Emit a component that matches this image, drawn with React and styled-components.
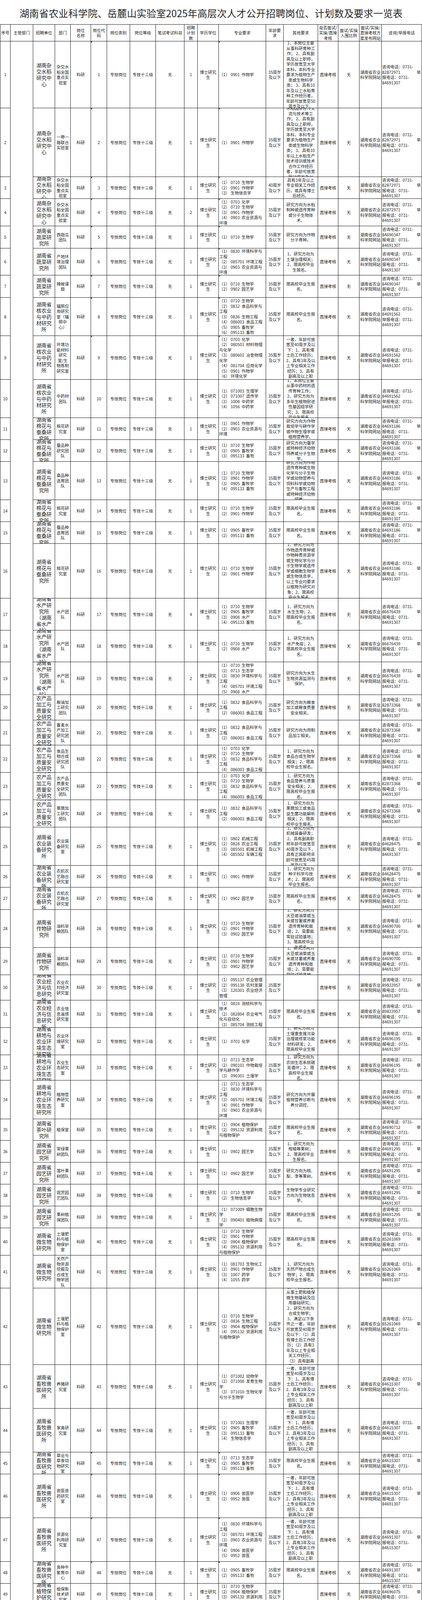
import React from 'react';
import styled, { createGlobalStyle, css } from 'styled-components';

const GlobalStyle = createGlobalStyle`
  html, body { margin: 0; padding: 0; background: #fff; }
  body {
    font-family: "Noto Sans CJK SC", "Noto Sans", "Liberation Sans", sans-serif;
    color: #1e1e1e;
  }
  #root { width: 1080px; }
`;

const COLS = [26, 58, 56, 40, 52, 41, 59, 66, 73, 34, 54, 121, 45, 88, 52, 54, 57, 103];
const HEIGHTS = [171, 176, 56, 70, 57, 69, 57, 98, 112, 98, 56, 56, 98, 56, 56, 140, 82, 81, 84, 65, 64, 70, 70, 70, 98, 56, 57, 97, 70, 65, 70, 70, 65, 99, 55, 56, 56, 56, 56, 70, 84, 196, 112, 112, 56, 112, 112, 56, 55, 56, 71];

const Page = styled.div`
  width: 1080px;
`;

const Title = styled.h1`
  margin: 0;
  height: 62px;
  padding-top: 4px;
  box-sizing: border-box;
  display: flex;
  align-items: center;
  justify-content: center;
  font-size: 25px;
  font-weight: 400;
  color: #2a2a2a;
  white-space: nowrap;
`;

const Table = styled.div`
  display: grid;
  grid-template-columns: ${COLS.map((c) => c + 'px').join(' ')};
  grid-template-rows: 43px ${HEIGHTS.map((h) => h + 'px').join(' ')};
  border-top: 1px solid #1a1a1a;
  border-left: 1px solid #1a1a1a;
  width: max-content;
`;

const Cell = styled.div`
  position: relative;
  box-sizing: border-box;
  border-right: 1px solid #1a1a1a;
  border-bottom: 1px solid #1a1a1a;
  display: flex;
  align-items: center;
  justify-content: center;
  overflow: hidden;
  min-width: 0;
  min-height: 0;
  font-size: 10.5px;
  line-height: 13.5px;
  text-align: center;
  padding: 0 1px;
  color: #1e1e1e;
  ${(p) =>
    p.$mark &&
    css`
      &::before {
        content: '';
        position: absolute;
        top: 0;
        left: 0;
        border-top: 4px solid #1f8c1f;
        border-right: 4px solid transparent;
      }
    `}
`;

const Inner = styled.div`
  width: 100%;
`;

const HeadCell = styled(Cell)`
  padding: ${(p) => p.$pad || '0 1px'};
`;

const SeqCell = styled(Cell)``;

const MergedCell = styled(Cell)`
  grid-column: 2;
  grid-row: 2 / span ${HEIGHTS.length};
`;

const UnitCell = styled(Cell)`
  font-size: 13px;
  line-height: 16px;
  padding: 0 6px;
`;

const DeptCell = styled(Cell)`
  padding: 0 2px;
`;

const EduCell = styled(Cell)`
  padding: 0 3px;
`;

const CountCell = styled(Cell)`
  padding: 0 2px;
`;

const AgeCell = styled(Cell)`
  padding: 0 3px;
`;

const MajorCell = styled(Cell)`
  justify-content: flex-start;
  text-align: left;
  padding: 0 0 0 1px;
`;

const MajorText = styled.div`
  width: 100%;
  text-align: left;
  white-space: pre-wrap;
`;

const OtherCell = styled(Cell)`
  padding: 0 4px;
`;

const SiteCell = styled(Cell)`
  padding: 0 1px;
`;

const PhoneCell = styled(Cell)`
  text-align: left;
  justify-content: flex-start;
  padding: 0 2px 0 1px;
`;

const PLine = styled.div`
  white-space: nowrap;
`;

const PSplit = styled.div`
  display: flex;
  justify-content: space-between;
  white-space: nowrap;
`;

const Notes = styled.div`
  padding: 0 0 0 2px;
  font-size: 10.5px;
  line-height: 13.6px;
  color: #1e1e1e;
`;

const NoteLine = styled.div``;

const HeadText = styled.div`
  width: 100%;
  white-space: pre-line;
`;

const RICE = '湖南杂交水稻研究中心';
const VEG = '湖南省蔬菜研究所';
const NUC = '湖南省核农业与中药材研究所';
const COT = '湖南省棉花与蚕桑研究所';
const FISH = '湖南省水产研究所（湖南省水产站）';
const PROC = '湖南省农产品加工与质量安全研究所';
const EQ = '湖南省农业装备研究所';
const CROP = '湖南省作物研究所';
const ECON = '湖南省农业经济与信息研究所';
const SOIL = '湖南省耕地与农业环境生态研究所';
const TEA = '湖南省茶叶研究所';
const HORT = '湖南省园艺研究所';
const MIC = '湖南省微生物研究所';
const ANI = '湖南省畜牧兽医研究所';
const PP = '湖南省植物保护研究所';

const GRAD = '限高校毕业生报名。';
const COND =
  '满足以下条件之一者，年龄可放宽至40周岁及以下：1、具有博士后工作经历；2、具有3年及以上专业相关工作经历；3、具有副高及以上职称。';

const FOOD4 = [
  ['0703', '化学'],
  ['0710', '生物学'],
  ['0832', '食品科学与工程'],
  ['086003', '食品工程'],
];
const FOOD2 = [
  ['0832', '食品科学与工程'],
  ['086003', '食品工程'],
];

const ROWS = [
  { u: RICE, d: '杂交水稻全国重点实验室', m: [['0901', '作物学']], o: '1、本岗位主要从事科研育种工作；  2、具有副高及以上职称，学历放宽至大学本科，本科专业要求为植物生产类或生物科学类；  3、具有10年及以上水稻育种工作经历者，年龄可放宽至50周岁及以下。', p: '82872971' },
  { u: RICE, d: '一带一路联合实验室', m: [['0901', '作物学']], o: '1、本岗位从事水稻国际合作交流与技术等工作；  2、具有副高及以上职称，学历放宽至大学本科，本科专业要求为植物生产类或生物科学类；  3、具有10年以上水稻生产技术培训或技术合作工作经历者，年龄可放宽至50周岁及以下。', p: '82872971' },
  { u: RICE, d: '杂交水稻全国重点实验室', m: [['0710', '生物学'], ['0901', '作物学'], ['', '生物信息学']], age: '40', o: '具有3年及以上专业相关工作经历，或具有博士后经历。', p: '82872971' },
  { u: RICE, d: '杂交水稻全国重点实验室', n: 2, m: [['0703', '化学'], ['0710', '生物学'], ['0901', '作物学'], ['0903', '农业资源与环境']], o: '研究方向为水稻制种或遗传育种或分子生物技术。', p: '82872971' },
  { u: VEG, d: '西甜瓜团队', m: [['0710', '生物学']], o: '研究方向为作物分子育种。', p: '84690347' },
  { u: VEG, d: '产地环境治理团队', m: [['0830', '环境科学与工程'], ['085701', '环境工程'], ['0903', '农业资源与环境']], o: '1、研究方向为土壤治理相关；2、限高校毕业生报名。', p: '84690347' },
  { u: VEG, d: '辣椒课题', m: [['0710', '生物学'], ['0902', '园艺学']], o: GRAD, p: '84690347' },
  { u: NUC, d: '辐照应用研究室（辐照中心）', m: [['0710', '生物学'], ['0832', '食品科学与工程'], ['0836', '生物工程'], ['086003', '食品工程'], ['0905', '畜牧学'], ['095133', '畜牧']], o: GRAD, p: '84691562', b: true },
  { u: NUC, d: '环境功能材料研究室/生物炼制研究室', m: [['0703', '化学'], ['080501', '材料物理与化学'], ['080601', '冶金物理化学'], ['081704', '应用化学'], ['0901', '作物学'], ['', '环境化学']], o: COND, p: '84691562', b: true },
  { u: NUC, d: '中药材团队', m: [['071003', '生理学'], ['071007', '遗传学'], ['1008', '中药学'], ['1056', '中药学']], o: '1、本岗位主要从事中药材的遗传育种工作；2、研究方向为多年生植物耐逆性基因组学研究；3、限高校毕业生报名。', p: '84691562', b: true },
  { u: COT, d: '棉花研究室', m: [['0901', '作物学'], ['0903', '农业资源与环境']], o: '研究方向为作物栽培学与耕作学或作物生理学或植物营养学。', p: '84693186' },
  { u: COT, d: '蚕品种研究团队', m: [['0710', '生物学'], ['0905', '畜牧学'], ['095133', '畜牧']], o: '研究方向为蚕学或特种经济动物饲养或分子生物学。', p: '84693186' },
  { u: COT, d: '桑品种选育团队', m: [['0710', '生物学'], ['0901', '作物学'], ['0905', '畜牧学'], ['095133', '畜牧']], o: '研究方向为作物遗传育种或生物化学与分子生物学或动物营养与饲料科学或动物生产与畜牧工程或特种经济动物饲养。', p: '84693186' },
  { u: COT, d: '棉花研究室', m: [['0710', '生物学'], ['0901', '作物学']], o: GRAD, p: '84693186' },
  { u: COT, d: '蚕品种选育团队', m: [['0905', '畜牧学'], ['095133', '畜牧']], o: GRAD, p: '84693186' },
  { u: COT, d: '棉花研究室', m: [['0710', '生物学'], ['0901', '作物学']], o: '1、研究方向为作物遗传育种或作物种质资源学或生物化学与分子生物学或遗传学或细胞生物学或生物信息学，以上专业均要求以植物为研究对象；2、限高校毕业生报名。', p: '84693186' },
  { u: FISH, d: '水产团队', n: 4, m: [['0710', '生物学'], ['0905', '畜牧学'], ['0908', '水产'], ['095133', '畜牧']], o: '1、研究方向为水生生物；2、限高校毕业生报名。', p: '86676439' },
  { u: FISH, d: '水产团队', m: [['0710', '生物学'], ['0908', '水产']], o: '1、研究方向为水产免疫；2、限高校毕业生报名。', p: '86676439' },
  { u: FISH, d: '水产团队', n: 2, m: [['0710', '生物学'], ['0713', '生态学'], ['0830', '环境科学与工程'], ['085701', '环境工程'], ['0908', '水产']], o: '研究方向为水生生物资源监测与保护。', p: '86676439' },
  { u: PROC, d: '粮油加工研究团队', m: FOOD2, o: '研究方向为粮食加工或粮食质量安全相关。', p: '82873368' },
  { u: PROC, d: '畜禽水产加工研究团队', m: FOOD2, o: '研究方向为肉制品加工相关。', p: '82873368' },
  { u: PROC, d: '食品生物合成研究团队', m: FOOD4, o: '1、研究方向为食品合成生物学相关；2、限高校毕业生报名。', p: '82873368' },
  { u: PROC, d: '农产品质量安全研究团队', m: FOOD4, o: '1、研究方向为食品营养与质量安全相关；2、限高校毕业生报名。', p: '82873368' },
  { u: PROC, d: '果蔬加工研究团队', m: FOOD2, o: '1、研究方向为果蔬加工或食品益生菌功能解析相关；2、限高校毕业生报名。', p: '82873368' },
  { u: EQ, d: '农业装备研究室', m: [['0802', '机械工程'], ['0828', '农业工程'], ['085501', '机械工程'], ['085502', '车辆工程']], o: '1、研究方向为机械装备研发；2、具有副高职称年龄可放宽至40周岁及以下，具有正高职称年龄可放宽至45周岁及以下。', p: '84628475' },
  { u: EQ, d: '农机农艺融合研究室', m: [['0901', '作物学']], o: '1、研究方向为种子科学与技术；2、限高校毕业生报名。', p: '84628475' },
  { u: EQ, d: '农机农艺融合研究室', m: [['0902', '园艺学']], o: GRAD, p: '84628475' },
  { u: CROP, d: '油料旱粮团队', m: [['0710', '生物学'], ['0901', '作物学'], ['0902', '园艺学']], o: '1、研究方向为大豆或油菜或玉米或甘薯或荞麦遗传育种和栽培；2、需要能常驻试验基地； 3、限高校毕业生报名', p: '84690700' },
  { u: CROP, d: '油料旱粮团队', n: 2, m: [['0710', '生物学'], ['0901', '作物学'], ['0902', '园艺学']], o: '1、研究方向为大豆或油菜或玉米或甘薯或荞麦遗传育种和栽培；2、需要能常驻试验基地。', p: '84690700' },
  { u: ECON, d: '农业农村经济研究室', m: [['095137', '农业管理'], ['095138', '农村发展'], ['120301', '农业经济管理']], o: '', p: '89833957' },
  { u: ECON, d: '农业信息遥感研究室', m: [['0816', '测绘科学与技术'], ['082804', '农业电气化与自动化'], ['085704', '测绘工程']], o: GRAD, p: '89833957' },
  { u: SOIL, d: '农业环境研究室', m: [['0703', '化学']], o: '1、研究方向为土壤重金属污染治理或修复功能材料研发；2、限高校毕业生报名。', p: '84696195' },
  { u: SOIL, d: '农业生态研究室', m: [['0713', '生态学'], ['090101', '作物栽培学与耕作学'], ['090301', '土壤学']], o: '1、研究方向为农田生态系统碳氮循环；2、限高校毕业生报名。', p: '84696195' },
  { u: SOIL, d: '植物营养研究室', m: [['0713', '生态学'], ['0830', '环境科学与工程'], ['085701', '环境工程'], ['0901', '作物学'], ['0903', '农业资源与环境']], o: '研究方向为开展植物营养诊断与养分调控。', p: '84696195' },
  { u: TEA, d: '植保室', m: [['0904', '植物保护'], ['095132', '资源利用与植物保护']], o: GRAD, p: '84690712' },
  { u: HORT, d: '常绿果树团队', m: [['0902', '园艺学']], o: '1、研究方向为柑橘等果树；2、限高校毕业生报名。', p: '84691295' },
  { u: HORT, d: '落叶果树团队', m: [['0902', '园艺学']], o: '研究方向为桃、梨、李等果树。', p: '84691295' },
  { u: HORT, d: '观赏园艺团队', m: [['0710', '生物学'], ['', '生物信息学']], o: '生物学专业研究方向为生物信息学。', p: '84691295' },
  { u: HORT, d: '果树植保团队', m: [['071009', '细胞生物学'], ['090401', '植物病理学']], o: GRAD, p: '84691295' },
  { u: MIC, d: '土壤肥料与植物保护室', m: [['0710', '生物学'], ['0901', '作物学'], ['0904', '植物保护'], ['095132', '资源利用与植物保护']], o: GRAD, p: '85261069' },
  { u: MIC, d: '天然产物资源挖掘及合成生物学团队', m: [['081703', '生物化工'], ['0901', '作物学'], ['1007', '药学'], ['1055', '药学']], o: '1、研究方向为天然产物合成生物学；2、限高校毕业生报名。', p: '85261069' },
  { u: MIC, d: '土壤肥料与植物保护室', m: [['0710', '生物学'], ['0836', '生物工程'], ['0904', '植物保护'], ['095132', '资源利用与植物保护']], o: '1、本岗位主要从事土肥和植保微生物基础及应用基础研究；2、研究方向为合成生物学；3、满足以下条件之一者，年龄可放宽至40周岁及以下：（1）具有博士后工作经历；（2）具有3年及以上专业相关工作经历；（3）具有副高及以上职称。', p: '85261069' },
  { u: ANI, d: '养猪研究室', m: [['071002', '动物学'], ['071008', '发育生物学'], ['071010', '生物化学与分子生物学']], o: COND, p: '84615307' },
  { u: ANI, d: '家禽研究室', m: [['071003', '生理学'], ['0905', '畜牧学'], ['095133', '畜牧'], ['', '生物信息学']], o: COND, p: '84615307' },
  { u: ANI, d: '草业与草食动物研究室', m: [['0713', '生态学'], ['0905', '畜牧学'], ['095133', '畜牧']], o: GRAD, p: '84615307' },
  { u: ANI, d: '兽医兽药研究室', m: [['0906', '兽医学'], ['0952', '兽医']], o: COND, p: '84615307' },
  { u: ANI, d: '资源化利用研究室', m: [['0830', '环境科学与工程'], ['085701', '环境工程'], ['0903', '农业资源与环境'], ['0906', '兽医学'], ['0952', '兽医']], o: COND, p: '84691307', r: '84615307' },
  { u: ANI, d: '良种牛繁育中心', m: [['0905', '畜牧学'], ['095133', '畜牧']], o: GRAD, p: '84691307', r: '84615307' },
  { u: PP, d: '植保新技术研究室', m: [['0710', '生物学'], ['0904', '植物保护'], ['095132', '资源利用与植物保护']], o: '', p: '84696075' },
  { u: PP, d: '环境评价中心', m: [['0904', '植物保护'], ['095132', '资源利用与植物保护']], o: '1、研究方向为农药分析或农药环毒；2、限高校毕业生报名。', p: '84696075' },
  { u: PP, d: '杂草生物学及安全防控研究室', m: [['0703', '化学'], ['0710', '生物学'], ['0904', '植物保护'], ['095132', '资源利用与植物保护']], o: GRAD, p: '84696075' },
];

const MARKED = new Set([1, 2, 3, 4, 5, 6, 7, 8, 9, 45, 46, 47, 48, 50, 51]);

const HEADERS = [
  { t: '序号' },
  { t: '主管部门' },
  { t: '招聘单位' },
  { t: '部门' },
  { t: '岗位\n名称' },
  { t: '岗位代码', pad: '0 3px' },
  { t: '岗位类别' },
  { t: '岗位等级' },
  { t: '笔试考试科目' },
  { t: '招聘计划数', pad: '0 2px' },
  { t: '学历学位' },
  { t: '专业要求' },
  { t: '年龄要求', pad: '0 3px' },
  { t: '其他要求' },
  { t: '是否面试/实操/直接考核' },
  { t: '面试/实操入围比例' },
  { t: '面试/实操/直接考核方案发布网站' },
  { t: '咨询/举报电话' },
];

function Header() {
  return HEADERS.map((h, i) => (
    <HeadCell key={'h' + i} $pad={h.pad}>
      <HeadText>{h.t}</HeadText>
    </HeadCell>
  ));
}

function majorsText(list) {
  return list
    .map(([code, name], i) => `（${i + 1}） ${code ? code + '  ' : ''}${name}`)
    .join('\n');
}

function Phone({ num, report, typeB }) {
  return (
    <Inner>
      <PLine>咨询电话：0731-</PLine>
      {typeB ? (
        <>
          <PLine>{num}</PLine>
          <PLine>举报电话：0731-</PLine>
        </>
      ) : (
        <>
          <PSplit>
            <span>{num}</span>
            <span>举</span>
          </PSplit>
          <PLine>报电话：0731-</PLine>
        </>
      )}
      <PLine>{report}</PLine>
    </Inner>
  );
}

function Row({ row, no }) {
  const mark = MARKED.has(no);
  return (
    <>
      <SeqCell>{no}</SeqCell>
      <UnitCell>
        <Inner>{row.u}</Inner>
      </UnitCell>
      <DeptCell>
        <Inner>{row.d}</Inner>
      </DeptCell>
      <Cell>科研</Cell>
      <Cell $mark={mark}>{no}</Cell>
      <Cell>专技岗位</Cell>
      <Cell>专技十三级</Cell>
      <Cell>无</Cell>
      <CountCell>{row.n || 1}</CountCell>
      <EduCell>
        <Inner>博士研究生</Inner>
      </EduCell>
      <MajorCell $mark={mark}>
        <MajorText>{majorsText(row.m)}</MajorText>
      </MajorCell>
      <AgeCell>
        <Inner>{(row.age || '35') + '周岁及以下'}</Inner>
      </AgeCell>
      <OtherCell>
        <Inner>{row.o}</Inner>
      </OtherCell>
      <Cell>直接考核</Cell>
      <Cell>无</Cell>
      <SiteCell>
        <Inner>湖南省农业科学院网站</Inner>
      </SiteCell>
      <PhoneCell>
        <Phone num={row.p} report={row.r || '84691307'} typeB={row.b} />
      </PhoneCell>
    </>
  );
}

const NOTES = [
  '注：',
  '1.本次招聘所设岗位要求的学历学位证书（学历认证）必须于2025年9月30日前取得；',
  '2.本次招聘所设专业不区分专业博士和学术博士；',
  '3.高校毕业生指2023、2024、2025年毕业且招聘过程中未落实编制内工作的毕业生；',
  '4.35周岁及以下指1989年4月30日以后出生，40周岁及以下指1984年4月30日以后出生；',
  '5.工作经历年限按足年足月累计计算，以2025年4月30日为截止日期。',
];

export default function App() {
  return (
    <Page>
      <GlobalStyle />
      <Title>湖南省农业科学院、岳麓山实验室2025年高层次人才公开招聘岗位、计划数及要求一览表</Title>
      <Table>
        <Header />
        <MergedCell />
        {ROWS.map((row, i) => (
          <Row key={i} row={row} no={i + 1} />
        ))}
      </Table>
      <Notes>
        {NOTES.map((n, i) => (
          <NoteLine key={i}>{n}</NoteLine>
        ))}
      </Notes>
    </Page>
  );
}
